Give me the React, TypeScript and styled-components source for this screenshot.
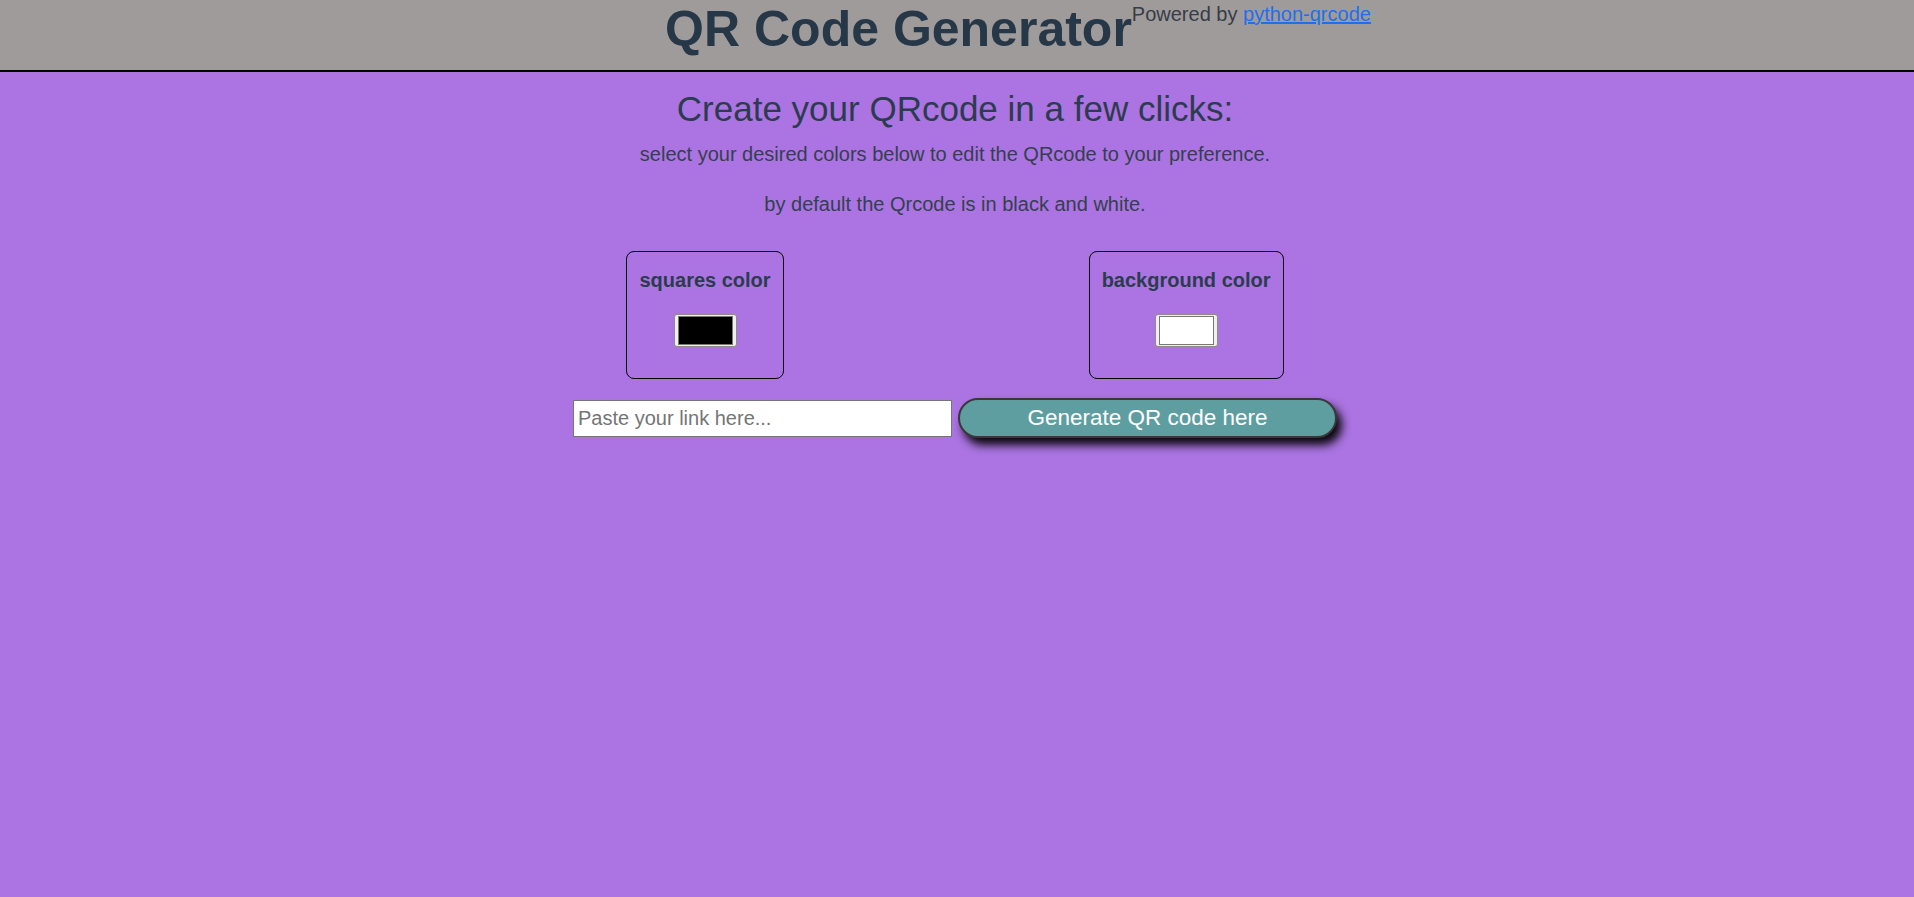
import React, { useState } from "react";
import styled, { createGlobalStyle } from "styled-components";

const GlobalStyle = createGlobalStyle`
  html, body {
    margin: 0;
    padding: 0;
    background: #ab74e2;
  }
  body {
    font-family: "Liberation Sans", Arial, sans-serif;
    color: #2b3c4e;
    min-height: 897px;
  }
`;

const Page = styled.div`
  min-height: 897px;
  background: #ab74e2;
`;

const Header = styled.header`
  height: 70px;
  background: #a09b9b;
  border-bottom: 2px solid #000;
  display: flex;
  justify-content: center;
  align-items: flex-start;
  padding-left: 122px;
  box-sizing: content-box;
`;

const Title = styled.h1`
  margin: 1px 0 0 0;
  font-size: 50px;
  line-height: 57px;
  font-weight: 700;
  color: #263748;
  white-space: nowrap;
`;

const Powered = styled.div`
  margin-top: 3px;
  font-size: 20px;
  line-height: 23px;
  color: #363d47;
  white-space: nowrap;
`;

const Link = styled.a`
  color: #1f6feb;
  text-decoration: underline;
`;

const Main = styled.main`
  display: flex;
  flex-direction: column;
  align-items: center;
  padding-right: 4px;
`;

const Heading = styled.h2`
  margin: 17px 0 0;
  font-size: 35px;
  line-height: 40px;
  font-weight: 400;
  color: #2b3c4e;
`;

const Text = styled.p<{ $gap: number }>`
  margin: ${(p) => p.$gap}px 0 0;
  font-size: 20px;
  line-height: 23px;
  color: #34404f;
`;

const Cards = styled.div`
  display: flex;
  align-items: flex-start;
  gap: 305px;
  margin-top: 35px;
`;

const Card = styled.div`
  display: flex;
  flex-direction: column;
  align-items: center;
  padding: 17px 12px 31px;
  border: 1px solid #000;
  border-radius: 8px;
`;

const CardTitle = styled.label`
  font-size: 20px;
  line-height: 23px;
  font-weight: 700;
  color: #2b3c4e;
  margin-bottom: 22px;
  white-space: nowrap;
`;

const ColorInput = styled.input`
  -webkit-appearance: none;
  appearance: none;
  box-sizing: border-box;
  width: 63px;
  height: 33px;
  padding: 1px 3px;
  border: 1px solid #8c8c8c;
  border-radius: 3px;
  background: #efefef;
  cursor: pointer;
  &::-webkit-color-swatch-wrapper {
    padding: 0;
  }
  &::-webkit-color-swatch {
    border: 1px solid #777;
    border-radius: 0;
  }
`;

const FormRow = styled.form`
  display: flex;
  align-items: center;
  gap: 6px;
  margin-top: 19px;
`;

const LinkInput = styled.input`
  box-sizing: border-box;
  width: 379px;
  height: 37px;
  padding: 0 4px;
  border: 1px solid #767676;
  background: #fff;
  font-family: "Liberation Sans", Arial, sans-serif;
  font-size: 20px;
  color: #222;
  &::placeholder {
    color: #757575;
  }
`;

const GenerateButton = styled.button`
  box-sizing: border-box;
  width: 379px;
  height: 40px;
  border: 2px solid #383838;
  border-radius: 20px;
  background: #5f9ea0;
  color: #fff;
  font-family: "Liberation Sans", Arial, sans-serif;
  font-size: 22.5px;
  line-height: 1;
  box-shadow: 5px 7px 10px rgba(0, 0, 0, 0.95);
  cursor: pointer;
`;

export default function App() {
  const [fill, setFill] = useState("#000000");
  const [back, setBack] = useState("#ffffff");
  const [link, setLink] = useState("");

  return (
    <Page>
      <GlobalStyle />
      <Header>
        <Title>QR Code Generator</Title>
        <Powered>
          Powered by{" "}
          <Link href="#" onClick={(e) => e.preventDefault()}>
            python-qrcode
          </Link>
        </Powered>
      </Header>
      <Main>
        <Heading>Create your QRcode in a few clicks:</Heading>
        <Text $gap={14}>
          select your desired colors below to edit the QRcode to your preference.
        </Text>
        <Text $gap={27}>by default the Qrcode is in black and white.</Text>
        <Cards>
          <Card>
            <CardTitle htmlFor="fill">squares color</CardTitle>
            <ColorInput
              id="fill"
              type="color"
              value={fill}
              onChange={(e) => setFill(e.target.value)}
            />
          </Card>
          <Card>
            <CardTitle htmlFor="back">background color</CardTitle>
            <ColorInput
              id="back"
              type="color"
              value={back}
              onChange={(e) => setBack(e.target.value)}
            />
          </Card>
        </Cards>
        <FormRow onSubmit={(e) => e.preventDefault()}>
          <LinkInput
            type="text"
            placeholder="Paste your link here..."
            value={link}
            onChange={(e) => setLink(e.target.value)}
          />
          <GenerateButton type="submit">Generate QR code here</GenerateButton>
        </FormRow>
      </Main>
    </Page>
  );
}
